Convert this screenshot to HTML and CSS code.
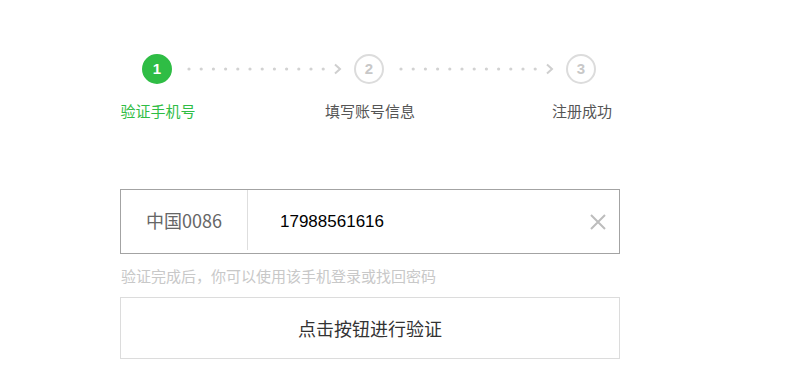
FILE: index.html
```html
<!DOCTYPE html>
<html lang="zh-CN">
<head>
  <meta charset="UTF-8">
  <title>注册 - 验证手机号</title>
  <link rel="stylesheet" href="styles.css">
</head>
<body>

<div class="wrap">
  <div class="steps">
    <span class="step-num active">1</span>
    <svg class="link" width="182" height="30" viewBox="0 0 182 30">
      <g fill="#d2d2d2">
        <circle cx="17" cy="15" r="1.6"/><circle cx="29.2" cy="15" r="1.6"/><circle cx="41.4" cy="15" r="1.6"/>
        <circle cx="53.6" cy="15" r="1.6"/><circle cx="65.8" cy="15" r="1.6"/><circle cx="78" cy="15" r="1.6"/>
        <circle cx="90.2" cy="15" r="1.6"/><circle cx="102.4" cy="15" r="1.6"/><circle cx="114.6" cy="15" r="1.6"/>
        <circle cx="126.8" cy="15" r="1.6"/><circle cx="139" cy="15" r="1.6"/><circle cx="151.2" cy="15" r="1.6"/>
      </g>
      <polyline points="163,10.5 168,15 163,19.5" fill="none" stroke="#cfcfcf" stroke-width="2"/>
    </svg>
    <span class="step-num">2</span>
    <svg class="link" width="182" height="30" viewBox="0 0 182 30">
      <g fill="#d2d2d2">
        <circle cx="17" cy="15" r="1.6"/><circle cx="29.2" cy="15" r="1.6"/><circle cx="41.4" cy="15" r="1.6"/>
        <circle cx="53.6" cy="15" r="1.6"/><circle cx="65.8" cy="15" r="1.6"/><circle cx="78" cy="15" r="1.6"/>
        <circle cx="90.2" cy="15" r="1.6"/><circle cx="102.4" cy="15" r="1.6"/><circle cx="114.6" cy="15" r="1.6"/>
        <circle cx="126.8" cy="15" r="1.6"/><circle cx="139" cy="15" r="1.6"/><circle cx="151.2" cy="15" r="1.6"/>
      </g>
      <polyline points="163,10.5 168,15 163,19.5" fill="none" stroke="#cfcfcf" stroke-width="2"/>
    </svg>
    <span class="step-num">3</span>
  </div>
  <div class="step-labels">
    <span class="step-label active">验证手机号</span>
    <span class="step-label">填写账号信息</span>
    <span class="step-label">注册成功</span>
  </div>

  <div class="phone-box">
    <div class="country">中国0086</div>
    <div class="phone">17988561616</div>
    <svg class="clear" width="18" height="18" viewBox="0 0 18 18">
      <path d="M2 2 L16 16 M16 2 L2 16" stroke="#bdbdbd" stroke-width="2" fill="none"/>
    </svg>
  </div>
  <p class="hint">验证完成后，你可以使用该手机登录或找回密码</p>
  <button class="verify-btn">点击按钮进行验证</button>
</div>

</body>
</html>
```

FILE: styles.css
```css
body {
  font-family: "Noto Sans CJK SC", "Liberation Sans", sans-serif;
  background: #fff;
  color: #333;
  margin: 0;
}
.wrap {
  width: 500px;
  margin-left: 120px;
  padding-top: 54px;
}
.steps {
  display: flex;
  align-items: center;
  padding-left: 22px;
}
.link {
  display: block;
}
.step-num {
  width: 26px;
  height: 26px;
  border: 2px solid #dcdcdc;
  border-radius: 50%;
  color: #c8c8c8;
  font-family: "Liberation Sans", Arial, sans-serif;
  font-weight: bold;
  font-size: 15px;
  line-height: 26px;
  text-align: center;
}
.step-num.active {
  background: #2fbd45;
  border-color: #2fbd45;
  color: #fff;
}
.step-labels {
  display: flex;
  gap: 132px;
  margin-left: -2px;
  margin-top: 17px;
}
.step-label {
  flex: none;
  width: 80px;
  white-space: nowrap;
  display: flex;
  justify-content: center;
  font-size: 15px;
  line-height: 20px;
  color: #555;
}
.step-label.active {
  color: #2fbd45;
}
.phone-box {
  display: flex;
  align-items: center;
  height: 63px;
  margin-top: 68px;
  border: 1px solid #a3a3a3;
}
.country {
  width: 126px;
  height: 60px;
  align-self: flex-start;
  border-right: 1px solid #dedede;
  color: #666;
  font-size: 18px;
  line-height: 60px;
  text-align: center;
}
.phone {
  flex: 1;
  padding-left: 32px;
  font-family: "Liberation Sans", Arial, sans-serif;
  font-size: 17px;
  color: #000;
}
.clear {
  margin-right: 12px;
}
.hint {
  margin: 12px 0 0 1px;
  font-size: 15px;
  line-height: 20px;
  color: #c8c8c8;
}
.verify-btn {
  display: block;
  width: 500px;
  height: 62px;
  margin-top: 11px;
  border: 1px solid #dcdcdc;
  background: #fff;
  font-family: "Noto Sans CJK SC", sans-serif;
  font-size: 18px;
  color: #333;
}
```
